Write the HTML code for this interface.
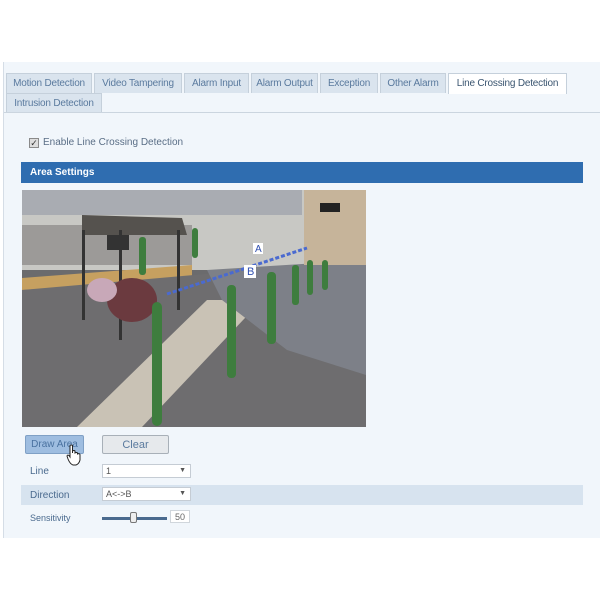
<!DOCTYPE html>
<html><head><style>
*{margin:0;padding:0;box-sizing:border-box}
body{width:600px;height:600px;background:#fff;font-family:"Liberation Sans",sans-serif;position:relative;overflow:hidden;font-size:10px;color:#4a6a8e}
.panel{position:absolute;left:3px;top:62px;width:597px;height:476px;background:#f1f6fb;border-left:1px solid #d5dde6}
.tab{position:absolute;height:20px;line-height:19px;background:#dae4ee;border:1px solid #c5d0db;border-bottom:none;color:#5a7a9e;font-size:10px;text-align:center;letter-spacing:-0.2px}
.tab.act{background:#fff;color:#3a5570}
.abs{position:absolute}
</style></head><body>
<div class="panel"></div>
<div class="tab" style="left:6px;top:73px;width:86px">Motion Detection</div>
<div class="tab" style="left:94px;top:73px;width:88px">Video Tampering</div>
<div class="tab" style="left:184px;top:73px;width:65px">Alarm Input</div>
<div class="tab" style="left:251px;top:73px;width:67px">Alarm Output</div>
<div class="tab" style="left:320px;top:73px;width:58px">Exception</div>
<div class="tab" style="left:380px;top:73px;width:66px">Other Alarm</div>
<div class="tab act" style="left:448px;top:73px;width:119px;height:21px">Line Crossing Detection</div>
<div class="tab" style="left:6px;top:93px;width:96px">Intrusion Detection</div>
<div class="abs" style="left:4px;top:112px;width:596px;height:1px;background:#cbd5df"></div>
<div class="abs" style="left:29px;top:138px;width:10px;height:10px;border:1px solid #8a8a8a;background:#ddd;font-size:9px;line-height:8px;text-align:center;color:#333">✓</div>
<div class="abs" style="left:43px;top:137px;color:#5a6e86">Enable Line Crossing Detection</div>
<div class="abs" style="left:21px;top:162px;width:562px;height:21px;background:#2f6db0;color:#fff;font-weight:bold;line-height:21px;padding-left:9px;font-size:10px">Area Settings</div>
<svg class="abs" style="left:22px;top:190px" width="344" height="237" viewBox="0 0 344 237">
<rect width="344" height="237" fill="#6b6b6d"/>
<rect width="344" height="80" fill="#c8c8c4"/>
<rect x="0" y="0" width="280" height="25" fill="#a9acb2"/>
<rect x="0" y="35" width="170" height="40" fill="#9c9a98"/>
<polygon points="0,88 170,75 170,90 0,100" fill="#c6a060"/>
<polygon points="0,100 344,70 344,237 0,237" fill="#6e6d6f"/>
<polygon points="55,237 185,110 240,110 120,237" fill="#c9c2b5"/>
<polygon points="185,80 344,70 344,185 265,160 200,110" fill="#7d8088"/>
<rect x="282" y="0" width="62" height="75" fill="#c6b49a"/>
<polygon points="60,25 160,28 165,45 60,45" fill="#55524e"/>
<rect x="60" y="40" width="3" height="90" fill="#333"/>
<rect x="97" y="40" width="3" height="110" fill="#333"/>
<rect x="155" y="40" width="3" height="80" fill="#333"/>
<rect x="85" y="45" width="22" height="15" fill="#333"/>
<ellipse cx="110" cy="110" rx="25" ry="22" fill="#6b3a3f"/>
<ellipse cx="80" cy="100" rx="15" ry="12" fill="#c8a8b8"/>
<g fill="#3e7d3e">
<rect x="130" y="112" width="10" height="124" rx="5"/>
<rect x="205" y="95" width="9" height="93" rx="4"/>
<rect x="245" y="82" width="9" height="72" rx="4"/>
<rect x="117" y="47" width="7" height="38" rx="3"/>
<rect x="170" y="38" width="6" height="30" rx="3"/>
<rect x="270" y="75" width="7" height="40" rx="3"/>
<rect x="285" y="70" width="6" height="35" rx="3"/>
<rect x="300" y="70" width="6" height="30" rx="3"/>
</g>
<line x1="145" y1="104" x2="285" y2="58" stroke="#4a6ad0" stroke-width="3" stroke-dasharray="4,2"/>
<rect x="231" y="53" width="10" height="11" fill="#fff"/><text x="233" y="62" font-size="10" fill="#3050b0" font-family="Liberation Sans">A</text>
<rect x="222" y="75" width="12" height="13" fill="#fff"/><text x="225" y="85" font-size="11" fill="#3050b0" font-family="Liberation Sans">B</text>
<rect x="298" y="13" width="20" height="9" fill="#222"/>
</svg>
<div class="abs" style="left:25px;top:435px;width:59px;height:19px;background:#9ebde0;border:1px solid #7fa0c5;border-radius:2px;color:#4a72a0;text-align:center;line-height:17px;font-size:10px">Draw Area</div>
<div class="abs" style="left:102px;top:435px;width:67px;height:19px;background:#e6e9ec;border:1px solid #a8b0b8;border-radius:2px;color:#5a7a9e;text-align:center;line-height:18px;font-size:11px">Clear</div>
<svg class="abs" style="left:66px;top:444px" width="16" height="22" viewBox="0 0 16 22"><path d="M4 1.5 Q5.5 0.5 6.5 1.5 V9 V7 Q8 6 9 7 V9 Q10.5 8 11.5 9 V10 Q13 9 14 10.5 V16 Q13 20 10 21 H7 Q4 20 2 15 L1 12 Q1.5 10.5 3 11.5 L4 13 Z" fill="#fff" stroke="#222" stroke-width="1"/></svg>
<div class="abs" style="left:30px;top:466px">Line</div>
<div class="abs" style="left:102px;top:464px;width:89px;height:14px;background:#fff;border:1px solid #c5ccd4;font-size:9px;padding-left:3px;line-height:12px;color:#555">1<span style="position:absolute;right:4px;font-size:7px">▼</span></div>
<div class="abs" style="left:21px;top:485px;width:562px;height:20px;background:#d7e3ef"></div>
<div class="abs" style="left:30px;top:490px">Direction</div>
<div class="abs" style="left:102px;top:487px;width:89px;height:14px;background:#fff;border:1px solid #c5ccd4;font-size:9px;padding-left:3px;line-height:12px;color:#555">A&lt;-&gt;B<span style="position:absolute;right:4px;font-size:7px">▼</span></div>
<div class="abs" style="left:30px;top:513px;font-size:9px">Sensitivity</div>
<div class="abs" style="left:102px;top:517px;width:65px;height:3px;background:#4a6a8e"></div>
<div class="abs" style="left:130px;top:512px;width:7px;height:11px;background:#eee;border:1px solid #777;border-radius:2px"></div>
<div class="abs" style="left:170px;top:510px;width:20px;height:13px;background:#fff;border:1px solid #d0d6dc;font-size:9px;text-align:center;line-height:12px;color:#666">50</div>
</body></html>
